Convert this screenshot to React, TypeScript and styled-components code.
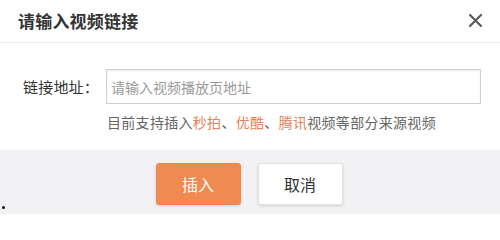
import React from "react";
import styled, { createGlobalStyle } from "styled-components";

const Global = createGlobalStyle`
  html, body { margin: 0; padding: 0; background: #fff; }
  body { font-family: "Noto Sans CJK SC", "Noto Sans", sans-serif; }
  * { box-sizing: border-box; }
`;

const Dialog = styled.div`
  width: 500px;
  height: 214px;
  display: flex;
  flex-direction: column;
  background: #fff;
`;

const Header = styled.div`
  height: 43px;
  display: flex;
  align-items: center;
  justify-content: space-between;
  padding: 0 18px 2px 18px;
  border-bottom: 1px solid #ececec;
`;

const Title = styled.div`
  font-size: 17px;
  font-weight: 700;
  color: #333;
  letter-spacing: 0.2px;
`;

const Close = styled.button`
  width: 14px;
  height: 14px;
  padding: 0;
  border: 0;
  background: none;
  display: flex;
  align-items: center;
  justify-content: center;
  cursor: pointer;
`;

const Body = styled.div`
  height: 107px;
  display: flex;
  flex-direction: column;
  padding: 26px 19px 0 23px;
`;

const Row = styled.div`
  display: flex;
  align-items: center;
`;

const Label = styled.label`
  width: 83px;
  font-size: 15px;
  letter-spacing: 0.2px;
  color: #333;
`;

const Input = styled.input`
  flex: 1;
  height: 35px;
  border: 1px solid #cfcfcf;
  box-shadow: inset 0 1px 2px rgba(0, 0, 0, 0.08);
  padding: 0 4px;
  font-family: inherit;
  font-size: 14px;
  color: #333;
  outline: none;
  &::placeholder { color: #9a9a9a; }
`;

const Hint = styled.div`
  margin: 8px 0 0 84px;
  font-size: 14px;
  letter-spacing: 0.3px;
  color: #666;
`;

const Source = styled.span`
  color: #e2845a;
`;

const Footer = styled.div`
  position: relative;
  flex: 1;
  background: #f2f2f4;
  display: flex;
  justify-content: center;
  align-items: flex-start;
  gap: 17px;
  padding-top: 13px;
  padding-right: 2px;
`;

const Button = styled.button<{ $primary?: boolean }>`
  width: 85px;
  height: 42px;
  border-radius: 3px;
  border: 1px solid ${(p) => (p.$primary ? "#ee8749" : "#e4e4e4")};
  background: ${(p) => (p.$primary ? "#f08a50" : "#fff")};
  color: ${(p) => (p.$primary ? "#fff" : "#333")};
  box-shadow: 0 1px 3px rgba(0, 0, 0, 0.15);
  font-family: inherit;
  font-size: 16px;
  cursor: pointer;
`;

const Dot = styled.span`
  position: absolute;
  left: 2px;
  bottom: 5px;
  width: 3px;
  height: 3px;
  border-radius: 50%;
  background: #111;
`;

export default function App() {
  return (
    <>
      <Global />
      <Dialog>
        <Header>
          <Title>请输入视频链接</Title>
          <Close aria-label="关闭">
            <svg width="13" height="13" viewBox="0 0 13 13">
              <path d="M1 1 L12 12 M12 1 L1 12" stroke="#555" strokeWidth="2" strokeLinecap="round" />
            </svg>
          </Close>
        </Header>
        <Body>
          <Row>
            <Label>链接地址：</Label>
            <Input placeholder="请输入视频播放页地址" />
          </Row>
          <Hint>
            目前支持插入<Source>秒拍</Source>、<Source>优酷</Source>、<Source>腾讯</Source>视频等部分来源视频
          </Hint>
        </Body>
        <Footer>
          <Button $primary>插入</Button>
          <Button>取消</Button>
          <Dot />
        </Footer>
      </Dialog>
    </>
  );
}
